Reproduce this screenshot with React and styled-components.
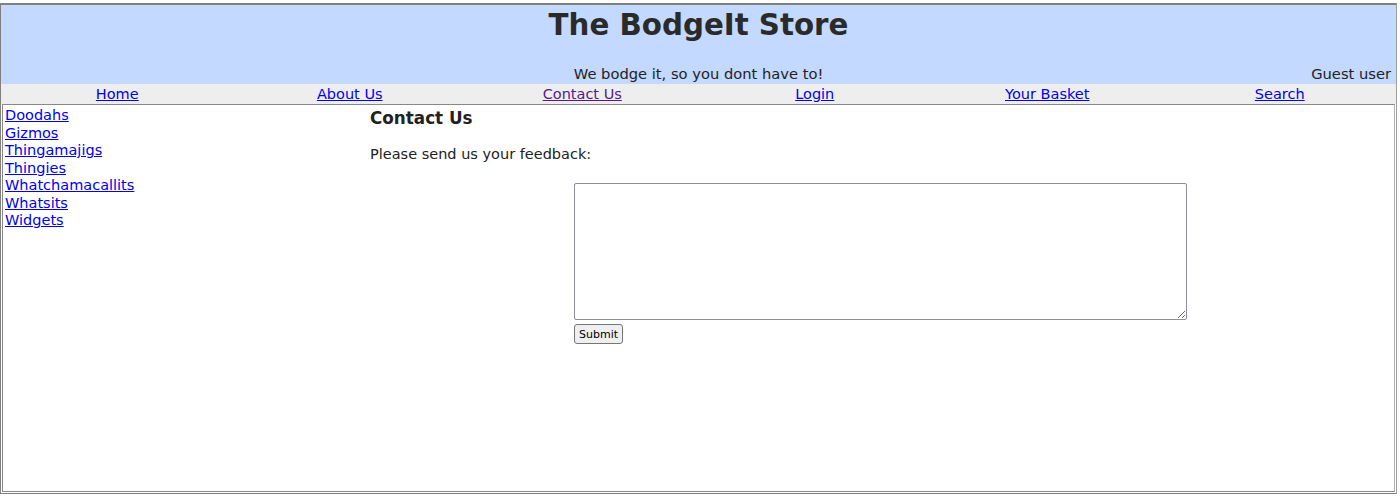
import React from "react";
import styled, { createGlobalStyle } from "styled-components";

const GlobalStyle = createGlobalStyle`
  html, body {
    margin: 0;
    padding: 0;
    background: #ffffff;
  }
  body {
    font-family: "DejaVu Sans", Verdana, sans-serif;
    font-size: 14.5px;
    color: #222222;
  }
`;

const Page = styled.div`
  box-sizing: border-box;
  width: 1397px;
  height: 491px;
  margin-top: 3px;
  border: 1px solid #808080;
  border-top-width: 2px;
  border-right-color: #a0a0a0;
  display: flex;
  flex-direction: column;
`;

const Header = styled.div`
  background: #c3d9ff;
  height: 79px;
  display: grid;
  grid-template-rows: auto 1fr;
`;

const Title = styled.h1`
  margin: 0;
  padding-top: 3px;
  text-align: center;
  font-size: 29.3px;
  line-height: 34px;
  font-weight: bold;
  color: #2a2a2a;
`;

const HeaderBottom = styled.div`
  display: grid;
  grid-template-columns: 1fr auto 1fr;
  align-items: end;
  padding-bottom: 2px;
  line-height: 17px;
`;

const Tagline = styled.div`
  grid-column: 2;
  font-size: 14.7px;
`;

const UserInfo = styled.div`
  grid-column: 3;
  justify-self: end;
  padding-right: 5px;
  font-size: 14.7px;
`;

const Nav = styled.div`
  background: #eeeeee;
  height: 20px;
  display: grid;
  grid-template-columns: repeat(6, 1fr);
  text-align: center;
  line-height: 21px;
`;

const Link = styled.a`
  color: ${(p) => (p.$visited ? "#551a8b" : "#0000ee")};
  text-decoration: underline;
  cursor: pointer;
`;

const Content = styled.div`
  flex: 1;
  margin: 0 1px 1px 1px;
  border: 1px solid #888888;
  border-right-color: #b0b0b0;
  display: flex;
`;

const Sidebar = styled.div`
  width: 362px;
  padding: 2px 2px;
  display: flex;
  flex-direction: column;
  line-height: 17.5px;
`;

const Main = styled.div`
  flex: 1;
  padding: 0 3px 0 1px;
`;

const Heading = styled.h3`
  margin: 3px 0 0 0;
  font-size: 16.8px;
  line-height: 20px;
  font-weight: bold;
  color: #222222;
`;

const Para = styled.p`
  margin: 17px 0 0 0;
  line-height: 18px;
`;

const Form = styled.form`
  margin: 20px auto 0 auto;
  width: 613px;
  display: flex;
  flex-direction: column;
  align-items: flex-start;
  gap: 4px;
`;

const TextArea = styled.textarea`
  box-sizing: border-box;
  width: 613px;
  height: 137px;
  border: 1px solid #8f8f9d;
  border-radius: 2px;
  resize: both;
  font-family: "Liberation Mono", monospace;
`;

const Button = styled.button`
  box-sizing: border-box;
  height: 20px;
  padding: 0 4px;
  font-family: "DejaVu Sans", Arial, sans-serif;
  font-size: 11px;
  color: #000000;
  background: #efefef;
  border: 1px solid #767676;
  border-radius: 3px;
`;

const navItems = [
  { label: "Home" },
  { label: "About Us" },
  { label: "Contact Us", visited: true },
  { label: "Login" },
  { label: "Your Basket" },
  { label: "Search" },
];

const categories = [
  "Doodahs",
  "Gizmos",
  "Thingamajigs",
  "Thingies",
  "Whatchamacallits",
  "Whatsits",
  "Widgets",
];

export default function App() {
  return (
    <>
      <GlobalStyle />
      <Page>
        <Header>
          <Title>The BodgeIt Store</Title>
          <HeaderBottom>
            <Tagline>We bodge it, so you dont have to!</Tagline>
            <UserInfo>Guest user</UserInfo>
          </HeaderBottom>
        </Header>
        <Nav>
          {navItems.map((item) => (
            <div key={item.label}>
              <Link $visited={item.visited}>{item.label}</Link>
            </div>
          ))}
        </Nav>
        <Content>
          <Sidebar>
            {categories.map((c) => (
              <div key={c}>
                <Link>{c}</Link>
              </div>
            ))}
          </Sidebar>
          <Main>
            <Heading>Contact Us</Heading>
            <Para>Please send us your feedback:</Para>
            <Form onSubmit={(e) => e.preventDefault()}>
              <TextArea />
              <Button type="submit">Submit</Button>
            </Form>
          </Main>
        </Content>
      </Page>
    </>
  );
}
